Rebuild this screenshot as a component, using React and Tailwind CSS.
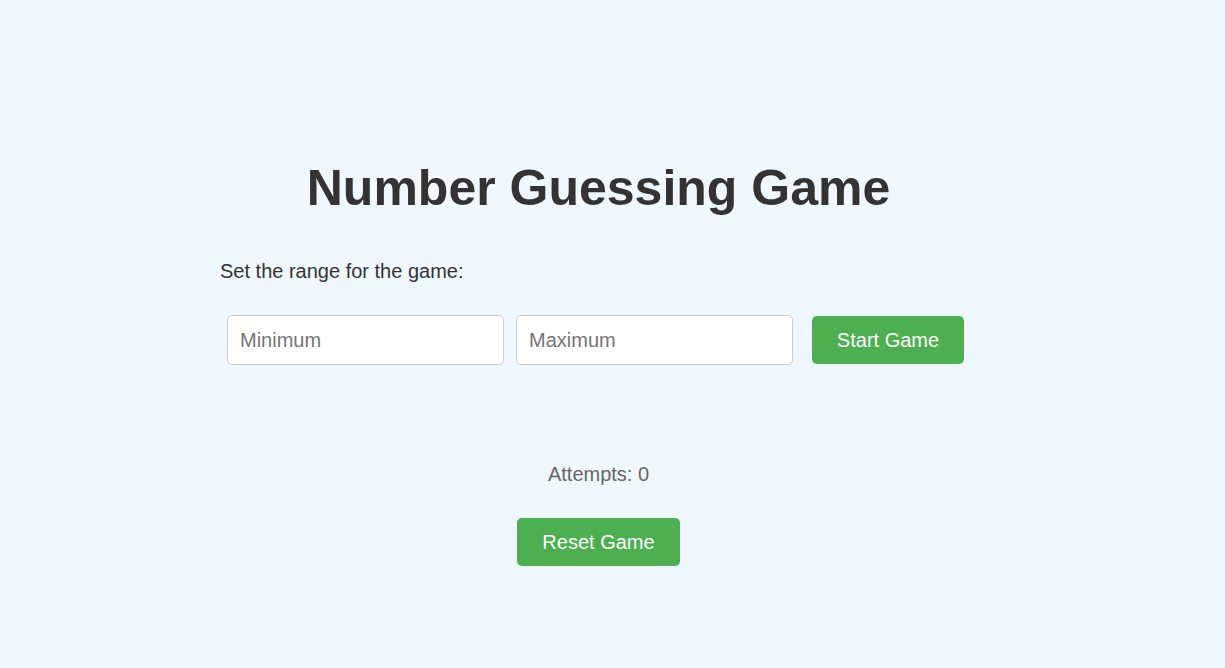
export default function App() {
  return (
    <div className="min-h-screen w-full bg-[#f0f8ff] font-['Liberation_Sans',Arial,sans-serif] text-[#333333]">
      <div className="h-[160px]"></div>
      <div className="ml-[220px] w-[757px] flex flex-col">
        <h1 className="text-center text-[50px] leading-[56px] font-bold text-[#333333]">
          Number Guessing Game
        </h1>
        <div className="h-[44px]"></div>
        <p className="text-[20px] leading-[23px] text-[#333333]">Set the range for the game:</p>
        <div className="h-[32px]"></div>
        <div className="flex items-center pl-[7px]">
          <input
            type="number"
            placeholder="Minimum"
            className="w-[277px] h-[50px] bg-white border border-[#cccccc] rounded-[5px] px-[12px] text-[20px] text-[#333333] placeholder:text-[#757575] outline-none"
          />
          <div className="w-[12px]"></div>
          <input
            type="number"
            placeholder="Maximum"
            className="w-[277px] h-[50px] bg-white border border-[#cccccc] rounded-[5px] px-[12px] text-[20px] text-[#333333] placeholder:text-[#757575] outline-none"
          />
          <div className="w-[19px]"></div>
          <button className="w-[152px] h-[48px] bg-[#4caf50] text-white text-[20px] rounded-[5px]">
            Start Game
          </button>
        </div>
        <div className="h-[98px]"></div>
        <p className="text-center text-[20px] leading-[23px] text-[#666666]">Attempts: 0</p>
        <div className="h-[32px]"></div>
        <div className="flex justify-center">
          <button className="w-[163px] h-[48px] bg-[#4caf50] text-white text-[20px] rounded-[5px]">
            Reset Game
          </button>
        </div>
      </div>
    </div>
  );
}
